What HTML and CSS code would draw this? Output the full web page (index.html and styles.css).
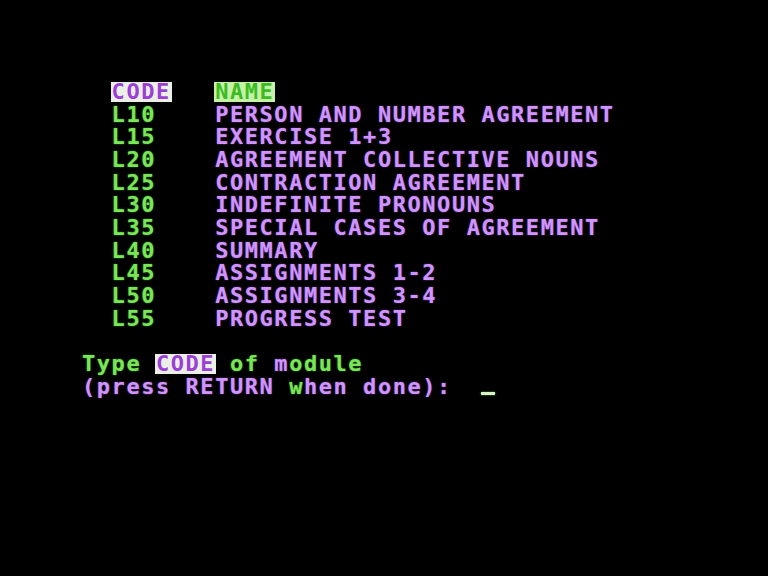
FILE: index.html
```html
<!DOCTYPE html>
<html>
<head>
<meta charset="utf-8">
<link rel="stylesheet" href="styles.css">
<title>Module menu</title>
</head>
<body>
<div class="screen">
  <div class="row">  <span class="inv inv-code">CODE</span>   <span class="inv inv-name">NAME</span></div>
  <div class="row">  <span class="code">L10</span>    <span class="name">PERSON AND NUMBER AGREEMENT</span></div>
  <div class="row">  <span class="code">L15</span>    <span class="name">EXERCISE 1+3</span></div>
  <div class="row">  <span class="code">L20</span>    <span class="name">AGREEMENT COLLECTIVE NOUNS</span></div>
  <div class="row">  <span class="code">L25</span>    <span class="name">CONTRACTION AGREEMENT</span></div>
  <div class="row">  <span class="code">L30</span>    <span class="name">INDEFINITE PRONOUNS</span></div>
  <div class="row">  <span class="code">L35</span>    <span class="name">SPECIAL CASES OF AGREEMENT</span></div>
  <div class="row">  <span class="code">L40</span>    <span class="name">SUMMARY</span></div>
  <div class="row">  <span class="code">L45</span>    <span class="name">ASSIGNMENTS 1-2</span></div>
  <div class="row">  <span class="code">L50</span>    <span class="name">ASSIGNMENTS 3-4</span></div>
  <div class="row">  <span class="code">L55</span>    <span class="name">PROGRESS TEST</span></div>
  <div class="row"> </div>
  <div class="row"><span class="green">Type </span><span class="inv inv-code">CODE</span><span class="green"> of </span><span class="name">m</span><span class="green">odule</span></div>
  <div class="row"><span class="name">(press RETURN </span><span class="green">w</span><span class="name">hen done):</span>  <span class="cursor"></span></div>
</div>
</body>
</html>
```
FILE: styles.css
```css
html, body {
  margin: 0;
  padding: 0;
  background: #000;
  width: 768px;
  height: 576px;
  overflow: hidden;
}

.screen {
  padding: 81px 0 0 82px;
  font-family: "DejaVu Sans Mono", "Liberation Mono", monospace;
  font-weight: bold;
  font-size: 22px;
  line-height: 22.67px;
  letter-spacing: 1.55px;
  color: #cf94ff;
}

.row {
  height: 22.67px;
  white-space: pre;
}

.code, .green {
  color: #78e656;
  text-shadow: 0 0 2px rgba(111, 226, 76, 0.6);
}

.name {
  color: #cf94ff;
  text-shadow: 0 0 2px rgba(190, 110, 255, 0.6);
}

.inv {
  display: inline-block;
  line-height: 20px;
  height: 20px;
  padding: 0 1px;
  margin: 0 -1px;
}

.inv-code {
  background: #ecefe6;
  color: #9b3fd6;
}

.inv-name {
  background: #c6f2a8;
  color: #3cbc22;
}

.cursor {
  display: inline-block;
  width: 14px;
  height: 3px;
  background: #d8f5c8;
  vertical-align: -1px;
  box-shadow: 0 0 2px rgba(120, 230, 80, 0.8);
}
```
